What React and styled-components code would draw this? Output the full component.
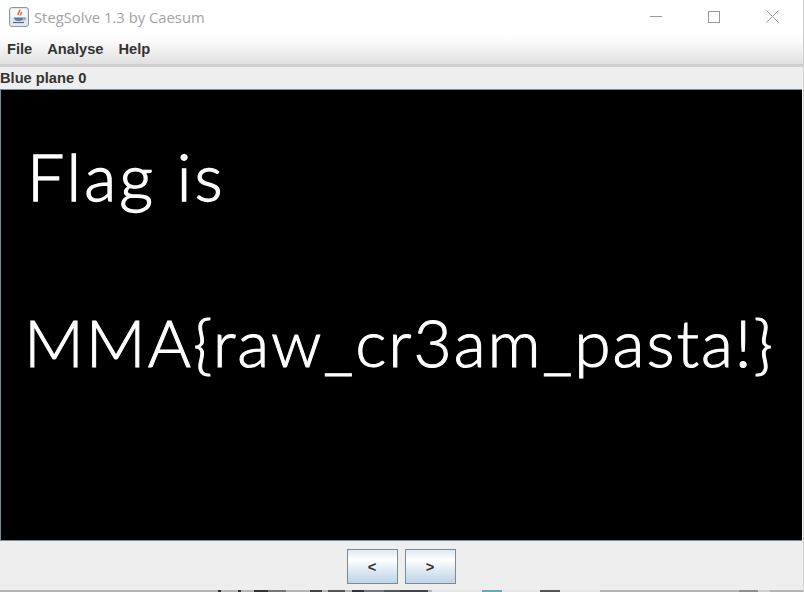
import React from 'react';
import styled, { createGlobalStyle } from 'styled-components';

const Global = createGlobalStyle`
  html, body { margin: 0; padding: 0; background: #ffffff; }
  body { width: 804px; height: 592px; overflow: hidden; font-family: "Liberation Sans", Arial, sans-serif; }
`;

const Frame = styled.div`
  width: 804px;
  height: 592px;
  box-sizing: border-box;
  border-right: 1px solid #cfcfcf;
  display: flex;
  flex-direction: column;
  overflow: hidden;
`;
const TitleBar = styled.div`
  height: 33px;
  flex: none;
  display: flex;
  align-items: center;
  background: #ffffff;
  padding-left: 9px;
`;
const TitleText = styled.span`
  margin-left: 5px;
  font-family: "Open Sans", "Noto Sans", sans-serif;
  font-size: 14.8px;
  color: #a3a3a3;
  white-space: nowrap;
`;
const WinButtons = styled.div`
  margin-left: auto;
  padding-right: 2px;
  display: flex;
  align-items: center;
  color: #999999;
`;
const WinButton = styled.div`
  width: 58px;
  height: 33px;
  display: flex;
  align-items: center;
  justify-content: center;
`;
const MenuBar = styled.div`
  height: 31px;
  flex: none;
  display: flex;
  align-items: center;
  gap: 15px;
  padding: 0 0 0 7px;
  box-sizing: border-box;
  background: linear-gradient(#ffffff 0%, #fbfbfb 25%, #e0e0e0 100%);
`;
const MenuItem = styled.span`
  font-size: 14.667px;
  font-weight: bold;
  color: #333333;
`;
const Divider = styled.div`
  height: 3px;
  flex: none;
  background: #cfcfcf;
`;
const PlaneLabel = styled.div`
  height: 22px;
  flex: none;
  background: #eeeeee;
  font-size: 14.667px;
  font-weight: bold;
  color: #333333;
  line-height: 22px;
`;
const Canvas = styled.div`
  height: 452px;
  flex: none;
  box-sizing: border-box;
  margin-right: 1px;
  background: #000000;
  border: 1px solid #7a8a99;
  border-right-width: 0;
  color: #ffffff;
  font-family: Lato, "Open Sans", sans-serif;
  font-size: 66px;
  line-height: 80px;
  padding: 46px 0 0 23px;
  white-space: nowrap;
`;
const FlagLine = styled.div`
  margin-left: ${p => p.$indent || 0}px;
  margin-bottom: ${p => p.$gap || 0}px;
  font-weight: 300;
  letter-spacing: ${p => p.$spacing || 0}px;
  -webkit-text-stroke: ${p => p.$stroke || 0}px #ffffff;
`;
const ButtonBar = styled.div`
  height: 49px;
  flex: none;
  box-sizing: border-box;
  padding: 2px 1px 0 0;
  display: flex;
  align-items: center;
  justify-content: center;
  gap: 7px;
  background: #eeeeee;
`;
const NavButton = styled.button`
  width: 51px;
  height: 35px;
  padding: 0;
  box-sizing: border-box;
  border: 1px solid #7a8a99;
  background: linear-gradient(#dfe9f3 0%, #ffffff 30%, #dce7f2 65%, #c0d3e6 100%);
  font-family: "Liberation Sans", Arial, sans-serif;
  font-size: 14.667px;
  font-weight: bold;
  color: #333333;
`;
// what shows of the window behind: the tops of some text, a teal blob, a gray tab
const BottomEdge = styled.div`
  height: 2px;
  flex: none;
  background: linear-gradient(90deg,
    #b5b5b5 0 218px, #333 218px 221px, #b5b5b5 221px 238px, #333 238px 241px,
    #b5b5b5 241px 254px, #333 254px 268px, #777 268px 286px, #b5b5b5 286px 310px,
    #444 310px 322px, #b5b5b5 322px 328px, #555 328px 345px, #b5b5b5 345px 352px,
    #333 352px 364px, #777 364px 384px, #555 384px 400px, #444 400px 428px,
    #b5b5b5 428px 432px, #e6e6e6 432px 482px, #6aa9ad 482px 502px, #e6e6e6 502px 540px,
    #555 540px 560px, #e6e6e6 560px 600px, #b5b5b5 600px 739px, #8f8f8f 739px 758px,
    #cfcfcf 758px 770px, #b5b5b5 770px 100%);
`;

const JavaIcon = () => (
  <svg width="20" height="20" viewBox="0 0 20 20">
    <rect x="0.5" y="0.5" width="19" height="19" rx="2.5" fill="#e4e8ee" stroke="#8e97a3" />
    <rect x="2" y="2" width="16" height="8" rx="1" fill="#f6f7f9" />
    <path d="M10.5 2.5c1.5 2-2.5 3-1 5.5M12.5 5c.8 1.300-1.800 1.800-.8 3.400" fill="none" stroke="#e2672a" strokeWidth="1.500" />
    <path d="M5 10.500h9.500c0 2.500-1.500 3.500-4.700 3.500S5 13 5 10.500z" fill="#5d7fa6" />
    <path d="M14.500 11h1.500c.8 0 .8 1.800-1.800 2" fill="none" stroke="#5d7fa6" />
    <path d="M4 15.500h11" stroke="#4a6c94" strokeWidth="1.200" />
  </svg>
);

const App = () => {
  return (
    <Frame>
      <Global />
      <TitleBar>
        <JavaIcon />
        <TitleText>StegSolve 1.3 by Caesum</TitleText>
        <WinButtons>
          <WinButton>
            <svg width="12" height="12" viewBox="0 0 12 12"><path d="M0 5.500h12" stroke="currentColor" /></svg>
          </WinButton>
          <WinButton>
            <svg width="12" height="12" viewBox="0 0 12 12"><rect x="0.500" y="0.500" width="11" height="11" fill="none" stroke="currentColor" /></svg>
          </WinButton>
          <WinButton>
            <svg width="13" height="13" viewBox="0 0 13 13"><path d="M.5.500l12 12M12.500.500l-12 12" stroke="currentColor" fill="none" /></svg>
          </WinButton>
        </WinButtons>
      </TitleBar>
      <MenuBar>
        <MenuItem>File</MenuItem>
        <MenuItem>Analyse</MenuItem>
        <MenuItem>Help</MenuItem>
      </MenuBar>
      <Divider />
      <PlaneLabel>Blue plane 0</PlaneLabel>
      <Canvas>
        <FlagLine $gap={86} $indent={3} $spacing={3} $stroke={1.3}>Flag is</FlagLine>
        <FlagLine $spacing={1.93} $stroke={1}>MMA{'{'}raw_cr3am_pasta!{'}'}</FlagLine>
      </Canvas>
      <ButtonBar>
        <NavButton>&lt;</NavButton>
        <NavButton>&gt;</NavButton>
      </ButtonBar>
      <BottomEdge />
    </Frame>
  );
};

export default App;
